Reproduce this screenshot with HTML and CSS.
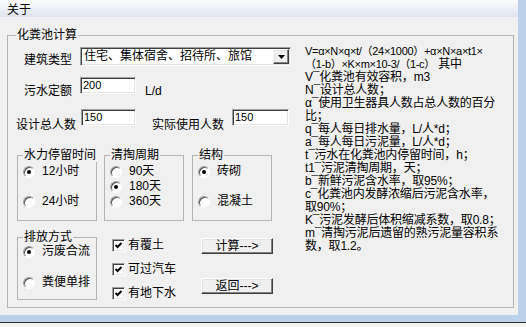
FILE: index.html
```html
<!DOCTYPE html>
<html lang="zh-CN">
<head>
  <meta charset="UTF-8">
  <title>化粪池计算</title>
  <link rel="stylesheet" href="styles.css">
</head>
<body>
  <div class="window">
    <div class="menubar"><span class="menu-item">关于</span></div>
    <div class="client">
      <fieldset class="group main">
        <legend>化粪池计算</legend>
        <div class="main-body">
          <div class="left">
            <div class="row row-type">
              <label class="lbl lbl-type">建筑类型</label>
              <div class="combo sunken">
                <span class="combo-text">住宅、集体宿舍、招待所、旅馆</span>
                <span class="combo-btn raised">
                  <svg width="7" height="4" viewBox="0 0 7 4"><path d="M0 0h7L3.5 4z" fill="#000"/></svg>
                </span>
              </div>
            </div>

            <div class="row row-quota">
              <label class="lbl lbl-quota" for="quota">污水定额</label>
              <input class="field sunken field-quota" id="quota" value="200">
              <span class="unit">L/d</span>
            </div>

            <div class="row row-people">
              <label class="lbl lbl-total" for="total">设计总人数</label>
              <input class="field sunken field-total" id="total" value="150">
              <label class="lbl lbl-actual" for="actual">实际使用人数</label>
              <input class="field sunken field-actual" id="actual" value="150">
            </div>

            <div class="row row-groups">
              <fieldset class="group opts">
                <legend>水力停留时间</legend>
                <div class="opt-list two">
                  <div class="opt"><span class="radio on"></span>12小时</div>
                  <div class="opt"><span class="radio"></span>24小时</div>
                </div>
              </fieldset>
              <fieldset class="group opts">
                <legend>清掏周期</legend>
                <div class="opt-list three">
                  <div class="opt"><span class="radio"></span>90天</div>
                  <div class="opt"><span class="radio on"></span>180天</div>
                  <div class="opt"><span class="radio"></span>360天</div>
                </div>
              </fieldset>
              <fieldset class="group opts struct">
                <legend>结构</legend>
                <div class="opt-list two">
                  <div class="opt"><span class="radio on"></span>砖砌</div>
                  <div class="opt"><span class="radio"></span>混凝土</div>
                </div>
              </fieldset>
            </div>

            <div class="row row-bottom">
              <fieldset class="group opts drain">
                <legend>排放方式</legend>
                <div class="opt-list">
                  <div class="opt"><span class="radio on"></span>污废合流</div>
                  <div class="opt"><span class="radio"></span>粪便单排</div>
                </div>
              </fieldset>

              <div class="checks">
                <div class="check"><span class="box sunken"><svg width="9" height="9" viewBox="0 0 9 9"><path d="M1.5 4L3.5 6L7.5 2" fill="none" stroke="#000" stroke-width="2"/></svg></span>有覆土</div>
                <div class="check"><span class="box sunken"><svg width="9" height="9" viewBox="0 0 9 9"><path d="M1.5 4L3.5 6L7.5 2" fill="none" stroke="#000" stroke-width="2"/></svg></span>可过汽车</div>
                <div class="check"><span class="box sunken"><svg width="9" height="9" viewBox="0 0 9 9"><path d="M1.5 4L3.5 6L7.5 2" fill="none" stroke="#000" stroke-width="2"/></svg></span>有地下水</div>
              </div>

              <div class="actions">
                <button type="button" class="btn raised">计算---&gt;</button>
                <button type="button" class="btn raised">返回---&gt;</button>
              </div>
            </div>
          </div>

          <div class="formula">
            <span class="eq">V=α×N×q×t/（24×1000）+α×N×a×t1×</span><br>
            <span class="eq">（1-b）×K×m×10-3/（1-c）</span> 其中<br>
            V¯化粪池有效容积，m3<br>
            N¯设计总人数；<br>
            α¯使用卫生器具人数占总人数的百分<br>
            比；<br>
            q¯每人每日排水量，L/人*d；<br>
            a¯每人每日污泥量，L/人*d；<br>
            t¯污水在化粪池内停留时间，h；<br>
            t1¯污泥清掏周期，天；<br>
            b¯新鲜污泥含水率，取95%；<br>
            c¯化粪池内发酵浓缩后污泥含水率，<br>
            取90%；<br>
            K¯污泥发酵后体积缩减系数，取0.8；<br>
            m¯清掏污泥后遗留的熟污泥量容积系<br>
            数，取1.2。
          </div>
        </div>
      </fieldset>
    </div>
  </div>
  <div class="taskbar"></div>
</body>
</html>
```

FILE: styles.css
```css
/* Reset */
* {
  box-sizing: border-box;
  margin: 0;
  padding: 0;
}

body {
  font-family: "Liberation Sans", "Noto Sans CJK SC", sans-serif;
  font-size: 12px;
  line-height: 13px;
  color: #000;
  background: #f3f3f3;
  width: 526px;
  height: 327px;
  overflow: hidden;
}

/* Window frame */
.window {
  width: 526px;
  height: 322px;
  display: flex;
  flex-direction: column;
  background: #f0f0f0;
  border-right: 8px solid #bcd2ea;
  border-bottom: 7px solid #bcd2ea;
}

.menubar {
  height: 17px;
  line-height: 17px;
  padding-left: 7px;
  background: linear-gradient(#fdfdfe, #dde3ef);
  font-family: "Noto Sans CJK SC", sans-serif;
}

.client {
  flex: 1;
  padding: 12px 0 0 7px;
}

.taskbar {
  height: 5px;
  border-top: 1px solid #2d2d2d;
  background: #f3f3f3;
}

/* Group boxes */
.group {
  border: 1px solid #b4b4b4;
  min-width: 0;
}

.group legend {
  margin-left: 5px;
  padding: 0 1px;
  line-height: 13px;
  white-space: nowrap;
}

.main {
  width: 507px;
  height: 279px;
}

.main > legend {
  margin-left: 8px;
}

.main-body {
  display: grid;
  grid-template-columns: 275px 1fr;
  column-gap: 14px;
  padding: 3px 0 0 8px;
}

/* 3D borders */
.sunken {
  background: #fff;
  border: 1px solid;
  border-color: #a0a0a0 #fff #fff #a0a0a0;
  box-shadow: inset 1px 1px #404040, inset -1px -1px #e3e3e3;
}

.raised {
  background: #f0f0f0;
  border: 1px solid;
  border-color: #fff #404040 #404040 #fff;
  box-shadow: inset -1px -1px #808080, inset 1px 1px #e3e3e3;
}

/* Left column */
.left {
  display: flex;
  flex-direction: column;
  padding-top: 2px;
}

.row {
  display: flex;
  align-items: flex-start;
}

.lbl {
  white-space: nowrap;
}

.row-type {
  height: 19px;
  padding-left: 8px;
}

.lbl-type {
  width: 56px;
  padding-top: 7px;
}

.combo {
  width: 211px;
  height: 19px;
  display: flex;
  padding: 1px;
}

.combo-text {
  flex: 1;
  line-height: 15px;
  padding-left: 2px;
  white-space: nowrap;
  overflow: hidden;
}

.combo-btn {
  width: 16px;
  height: 15px;
  display: flex;
  align-items: center;
  justify-content: center;
}

.field {
  height: 17px;
  padding: 1px 2px 3px;
  font-family: "Liberation Sans", sans-serif;
  font-size: 11px;
  color: #000;
  outline: none;
}

.row-quota {
  height: 17px;
  margin-top: 11px;
  padding-left: 8px;
}

.lbl-quota {
  width: 56px;
  padding-top: 8px;
}

.field-quota {
  width: 56px;
}

.unit {
  margin-left: 9px;
  padding-top: 8px;
}

.row-people {
  height: 17px;
  margin-top: 15px;
}

.lbl-total {
  width: 65px;
  padding-top: 10px;
}

.field-total {
  width: 55px;
}

.lbl-actual {
  width: 80px;
  margin-left: 16px;
  padding-top: 10px;
}

.field-actual {
  width: 57px;
}

/* Option groups */
.row-groups {
  margin-top: 23px;
  padding-left: 1px;
  gap: 7px;
}

.opts {
  width: 80px;
  height: 72px;
}

.struct {
  margin-left: 1px;
}

.opt-list {
  display: flex;
  flex-direction: column;
  padding: 3px 0 0 5px;
}

.opt-list.two {
  gap: 17px;
}

.opt-list.three {
  gap: 2px;
}

.opt {
  display: flex;
  align-items: center;
  gap: 7px;
  height: 13px;
  white-space: nowrap;
}

.radio {
  position: relative;
  width: 12px;
  height: 12px;
  flex: none;
  border-radius: 50%;
  background: #fff;
  border: 1px solid;
  border-color: #a0a0a0 #fff #fff #a0a0a0;
  box-shadow: inset 1px 1px #505050;
}

.radio.on::after {
  content: "";
  position: absolute;
  left: 3px;
  top: 3px;
  width: 4px;
  height: 4px;
  border-radius: 50%;
  background: #000;
}

/* Bottom row */
.row-bottom {
  margin-top: 10px;
  padding-left: 1px;
}

.drain {
  height: 69px;
}

.drain .opt-list {
  padding-top: 1px;
  gap: 18px;
}

.checks {
  width: 89px;
  margin-left: 15px;
  padding-top: 8px;
  display: flex;
  flex-direction: column;
  gap: 11px;
}

.check {
  display: flex;
  align-items: center;
  gap: 3px;
  height: 13px;
  white-space: nowrap;
}

.box {
  width: 13px;
  height: 13px;
  flex: none;
  display: flex;
  align-items: center;
  justify-content: center;
}

.actions {
  padding-top: 7px;
  display: flex;
  flex-direction: column;
  gap: 24px;
}

.btn {
  width: 72px;
  height: 16px;
  font-family: "Liberation Sans", "Noto Sans CJK SC", sans-serif;
  font-size: 12px;
  line-height: 13px;
  color: #000;
  text-align: center;
  cursor: pointer;
}

/* Formula text */
.formula {
  font-family: "Liberation Sans Narrow", "Liberation Sans", "Noto Sans CJK SC", sans-serif;
  white-space: nowrap;
  line-height: 13px;
  letter-spacing: -0.2px;
}

.formula .eq {
  font-size: 11px;
  letter-spacing: -0.3px;
}
```
